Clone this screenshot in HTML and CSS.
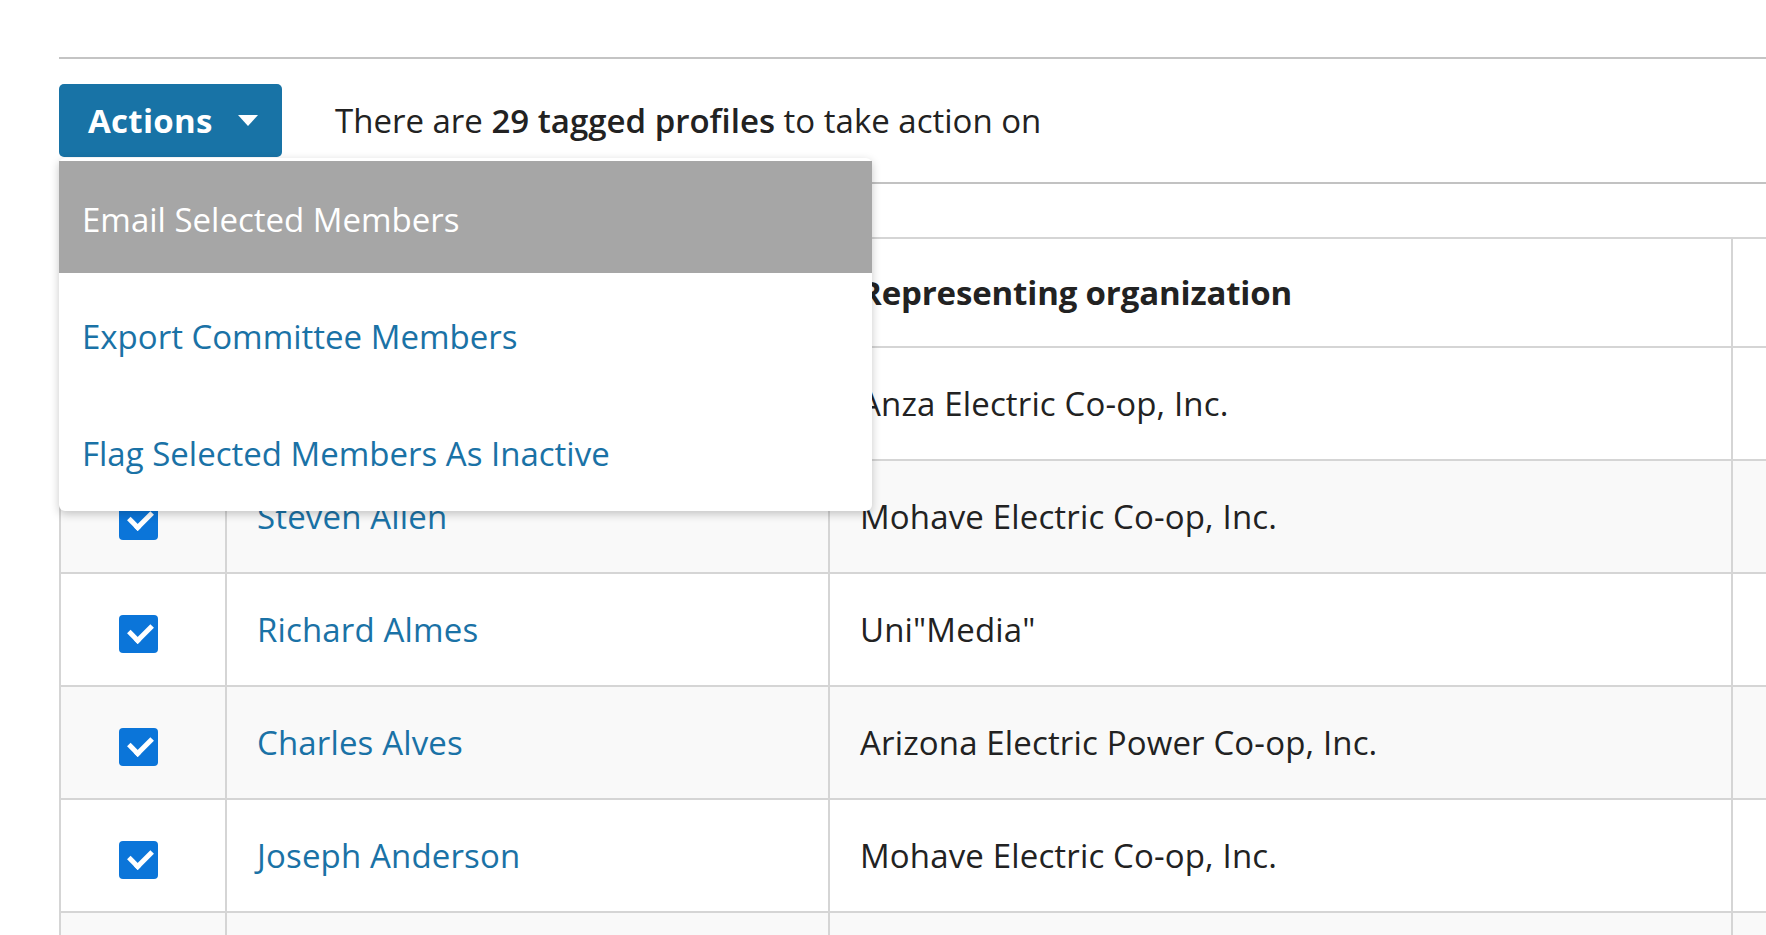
FILE: index.html
```html
<!DOCTYPE html>
<html lang="en">
<head>
<meta charset="utf-8">
<title>Committee Members</title>
<link rel="stylesheet" href="styles.css">
</head>
<body>
<div class="page">
  <div class="top-rule"></div>
  <div class="toolbar">
    <div class="actions">
      <button class="btn-actions" type="button">Actions <span class="caret"></span></button>
      <ul class="menu">
        <li class="menu-item menu-item-active">Email Selected Members</li>
        <li class="menu-item">Export Committee Members</li>
        <li class="menu-item">Flag Selected Members As Inactive</li>
      </ul>
    </div>
    <p class="summary">There are <strong>29 tagged profiles</strong> to take action on</p>
  </div>
  <div class="mid-rule"></div>
  <table class="members">
    <colgroup>
      <col class="col-check">
      <col class="col-name">
      <col class="col-org">
      <col class="col-extra">
    </colgroup>
    <thead>
      <tr>
        <th class="cell-check"><span class="check"></span></th>
        <th class="cell-text">Name</th>
        <th class="cell-text">Representing organization</th>
        <th class="cell-text"></th>
      </tr>
    </thead>
    <tbody>
      <tr>
        <td class="cell-check"><span class="check"></span></td>
        <td class="cell-text"><a class="name-link" href="#">Ronald Aguirre</a></td>
        <td class="cell-text">Anza Electric Co-op, Inc.</td>
        <td class="cell-text"></td>
      </tr>
      <tr>
        <td class="cell-check"><span class="check"></span></td>
        <td class="cell-text"><a class="name-link" href="#">Steven Allen</a></td>
        <td class="cell-text">Mohave Electric Co-op, Inc.</td>
        <td class="cell-text"></td>
      </tr>
      <tr>
        <td class="cell-check"><span class="check"></span></td>
        <td class="cell-text"><a class="name-link" href="#">Richard Almes</a></td>
        <td class="cell-text">Uni"Media"</td>
        <td class="cell-text"></td>
      </tr>
      <tr>
        <td class="cell-check"><span class="check"></span></td>
        <td class="cell-text"><a class="name-link" href="#">Charles Alves</a></td>
        <td class="cell-text">Arizona Electric Power Co-op, Inc.</td>
        <td class="cell-text"></td>
      </tr>
      <tr>
        <td class="cell-check"><span class="check"></span></td>
        <td class="cell-text"><a class="name-link" href="#">Joseph Anderson</a></td>
        <td class="cell-text">Mohave Electric Co-op, Inc.</td>
        <td class="cell-text"></td>
      </tr>
      <tr>
        <td class="cell-check"></td>
        <td class="cell-text"></td>
        <td class="cell-text"></td>
        <td class="cell-text"></td>
      </tr>
    </tbody>
  </table>
</div>
</body>
</html>
```

FILE: styles.css
```css
* {
  box-sizing: border-box;
}

html, body {
  margin: 0;
  padding: 0;
  background: #ffffff;
}

body {
  font-family: "Open Sans", "Noto Sans", sans-serif;
  font-size: 33px;
  color: #222222;
  width: 1766px;
  height: 935px;
  overflow: hidden;
}

.page {
  padding-left: 59px;
  width: 1766px;
}

.top-rule {
  margin-top: 57px;
  border-top: 2px solid #c4c4c4;
}

.toolbar {
  margin-top: 25px;
  display: flex;
  align-items: center;
  gap: 53px;
  height: 73px;
}

.actions {
  position: relative;
  flex: none;
}

.btn-actions {
  display: flex;
  align-items: center;
  gap: 25px;
  width: 223px;
  height: 73px;
  padding: 0 0 0 29px;
  border: none;
  border-radius: 5px;
  background: #1873a6;
  color: #ffffff;
  font-family: "Open Sans", "Noto Sans", sans-serif;
  font-size: 33px;
  font-weight: 700;
  letter-spacing: 0.3px;
  cursor: pointer;
}

.caret {
  width: 0;
  height: 0;
  border-left: 10.5px solid transparent;
  border-right: 10.5px solid transparent;
  border-top: 11px solid #ffffff;
}

.menu {
  position: absolute;
  top: 74px;
  left: 0;
  z-index: 10;
  width: 813px;
  margin: 0;
  padding: 3px 0 4px;
  list-style: none;
  background: #ffffff;
  border-radius: 6px;
  box-shadow: 0 3px 10px rgba(0, 0, 0, 0.22);
}

.menu-item {
  display: flex;
  align-items: center;
  height: 117px;
  padding: 10px 23px 0;
  color: #1a72a6;
  white-space: nowrap;
}

.menu-item-active {
  height: 112px;
  padding-top: 5px;
  background: #a6a6a6;
  color: #ffffff;
}

.summary {
  margin: 0;
  white-space: nowrap;
}

.summary strong {
  font-weight: 600;
}

.mid-rule {
  margin-top: 25px;
  border-top: 2px solid #c2c2c2;
}

.members {
  margin-top: 53px;
  table-layout: fixed;
  width: 1974px;
  border-collapse: separate;
  border-spacing: 0;
  border-top: 2px solid #d5d5d5;
  border-left: 2px solid #d5d5d5;
}

.col-check { width: 166px; }
.col-name { width: 603px; }
.col-org { width: 903px; }
.col-extra { width: 300px; }

.members th,
.members td {
  border-right: 2px solid #d5d5d5;
  border-bottom: 2px solid #d5d5d5;
  vertical-align: middle;
  white-space: nowrap;
  overflow: hidden;
}

.members thead th {
  height: 109px;
  text-align: left;
  font-weight: 700;
  letter-spacing: -0.15px;
}

.members tbody td {
  height: 113px;
}

.members tbody tr:nth-child(even) td {
  background: #f9f9f9;
}

.cell-check {
  padding: 0 0 0 58px;
}

.cell-text {
  padding: 0 0 0 30px;
  letter-spacing: 0.15px;
}

.check {
  display: block;
  width: 39px;
  height: 38px;
  margin-top: 9px;
  border-radius: 4px;
  background: #0b75d9;
  position: relative;
}

.check::after {
  content: "";
  position: absolute;
  left: 10px;
  top: 8px;
  width: 18px;
  height: 10px;
  border-left: 5px solid #ffffff;
  border-bottom: 5px solid #ffffff;
  transform: rotate(-45deg);
}

.name-link {
  color: #1a72a6;
  text-decoration: none;
}
```
